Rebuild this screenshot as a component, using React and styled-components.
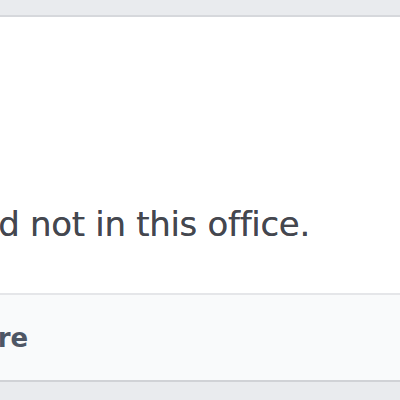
import React from 'react';
import styled, { createGlobalStyle } from 'styled-components';

const GlobalStyle = createGlobalStyle`
    html, body {
        margin: 0;
        padding: 0;
        background: #e9ebee;
        overflow: hidden;
    }
    body {
        font-family: "DejaVu Sans", "Open Sans", sans-serif;
    }
`;

const Page = styled.div`
    width: 400px;
    height: 400px;
    padding-top: 15px;
    box-sizing: border-box;
    overflow: hidden;
`;

// the card is wider than the window and starts off to the left,
// so the message and the action are cut at the left edge
const Card = styled.div`
    margin-left: -${props => props.shift}px;
    width: 800px;
    background: #ffffff;
    border-top: 2px solid #d6d8dc;
    border-bottom: 2px solid #d0d2d6;
`;

const Body = styled.div`
    height: 276px;
    display: flex;
    align-items: flex-end;
    justify-content: flex-end;
    box-sizing: border-box;
    padding: 0 ${props => props.endGap}px 49px 0;
`;

const Message = styled.p`
    margin: 0;
    font-size: 34px;
    line-height: 40px;
    letter-spacing: -0.3px;
    color: #44474f;
    text-shadow: 0 0 0.6px rgba(68, 71, 79, 0.7);
    white-space: nowrap;
`;

const Footer = styled.div`
    height: 87px;
    background: #f9fafb;
    border-top: 2px solid #e5e6e9;
    box-sizing: border-box;
    display: flex;
    align-items: center;
    padding-left: ${props => props.indent}px;
`;

const Action = styled.span`
    font-size: 26px;
    font-weight: bold;
    color: #4e5665;
`;

export default function App() {
    return (
        <Page>
            <GlobalStyle />
            <Card shift={200}>
                <Body endGap={290}>
                    <Message>I am away and not in this office.</Message>
                </Body>
                <Footer indent={143}>
                    <Action>Share</Action>
                </Footer>
            </Card>
        </Page>
    );
}
